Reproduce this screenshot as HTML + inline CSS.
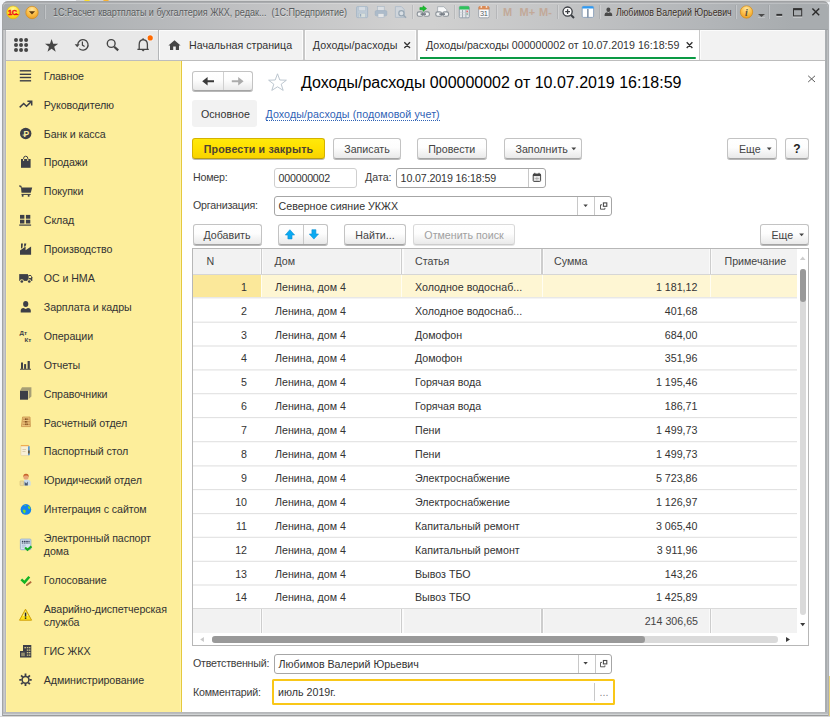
<!DOCTYPE html>
<html lang="ru">
<head>
<meta charset="utf-8">
<title>1С:Расчет квартплаты и бухгалтерия ЖКХ</title>
<style>
*{box-sizing:border-box;margin:0;padding:0}
html,body{width:830px;height:717px;overflow:hidden;background:#f3f6fa}
body{position:relative;font-family:"Liberation Sans",Arial,sans-serif;font-size:10.67px;color:#3c3c3c;line-height:13px}
.abs{position:absolute}
.t{position:absolute;white-space:nowrap;line-height:13px}
/* window frame */
#frame{left:1.6px;top:1.4px;width:827.5px;height:714.7px;border-radius:6px 6px 0 0;box-shadow:inset 0 1.4px 0 #a0a2a4;background:linear-gradient(to right,#a2a4a6 0,#a2a4a6 1.2px,#c9cacb 1.6px,#c9cacb 2.8px,#b5b7bb 3.2px,#b5b7bb 823px,#a8acaf 823.6px,#a8acaf 824.6px,#bcbec0 825.2px,#bcbec0 826.4px,#808488 826.8px)}
#tbar{left:2.8px;top:2.8px;width:825.6px;height:27px;border-radius:5px 5px 0 0;background:linear-gradient(to right,#a6aaad 0,#a8acaf 30px,#bfc0c2 234px,#d0d0d0 400px,#d0d0d0 430px,#c4c5c6 548px,#b2b5b8 708px,#a8acaf 790px,#a8acaf 100%)}
#tbar:before{content:"";position:absolute;left:0;top:0;right:0;height:1.3px;background:rgba(255,255,255,.22);border-radius:5px 5px 0 0}
#tbar:after{content:"";position:absolute;left:0;bottom:0;right:0;height:1.2px;background:rgba(0,0,0,.055)}
#bbar{left:2.8px;top:711.8px;width:825.4px;height:4.3px;background:linear-gradient(#b6b8ba 0,#b6b8ba 1.4px,#d0d3d4 1.9px,#d0d3d4 3px,#9a9b9c 3.4px)}
#client{left:5.9px;top:30.3px;width:819.2px;height:681.5px;background:#fff}
#tabsbar{left:5.9px;top:30.3px;width:819.2px;height:30.6px;background:#f2f2f2;border-bottom:1.1px solid #bdbdbd;border-top:1px solid #fbfbfb}
#sidebar{left:5.9px;top:60.8px;width:176.5px;height:651px;background:#fdee9b;border-right:1.4px solid #e5c93e;border-left:1px solid #fff3a6;box-shadow:inset -1.1px 0 0 #fff4aa}
.si{position:absolute;left:43.8px;white-space:nowrap;color:#333;line-height:13.3px;letter-spacing:-.08px}
.btn{position:absolute;height:20.8px;border:1px solid #c3c3c3;border-bottom-color:#a4a4a4;border-radius:3px;background:linear-gradient(#fff 0,#fdfdfd 45%,#e9e9e9 100%);box-shadow:0 1px .6px rgba(0,0,0,.28);text-align:center;line-height:20.4px;color:#444;white-space:nowrap}
.inp{position:absolute;height:20px;border:1px solid #a6a6a6;border-radius:3px;background:#fff;line-height:18.6px;padding-left:3.6px;color:#333;white-space:nowrap}
.row{position:absolute;left:193px;width:604px;height:23.85px}
.row span{position:absolute;top:6px;line-height:13px;white-space:nowrap;color:#333}
.c1{left:0;width:54px;text-align:right}
.c2{left:82px}
.c3{left:222px}
.c4{left:350px;width:154.4px;text-align:right}
.vl{position:absolute;width:1px;background:#e0e0e0}
</style>
</head>
<body>
<div class="abs" style="left:76px;top:0;width:754px;height:1.5px;background:#d3d4d5"></div>
<div class="abs" style="left:84px;top:-4.5px;width:6px;height:6px;border-radius:3px;background:#ffe02a"></div>
<div class="abs" style="left:103px;top:-4.5px;width:6px;height:6px;border-radius:3px;background:#f9b233"></div>
<div class="abs" style="left:0;top:716px;width:830px;height:1px;background:#d6d6d6"></div>
<div class="abs" style="left:829px;top:676px;width:1px;height:40px;background:#e9d37a"></div>
<div class="abs" id="frame"></div>
<div class="abs" id="tbar"></div>
<div class="abs" id="bbar"></div>
<div class="abs" id="client"></div>

<!-- title bar -->
<div class="t" style="left:53px;top:6px;font-size:10.67px;color:#5a5d60;text-shadow:0 1px 0 rgba(255,255,255,.45);transform:scaleX(.846);transform-origin:0 0">1С:Расчет квартплаты и бухгалтерия ЖКХ, редак...&nbsp; (1С:Предприятие)</div>
<div class="t" style="left:615.5px;top:6px;font-size:10.67px;color:#3d3128;text-shadow:0 1px 0 rgba(255,255,255,.35);transform:scaleX(.825);transform-origin:0 0">Любимов Валерий Юрьевич</div>
<div class="t" style="left:503px;top:6px;font-size:11px;font-weight:bold;color:#c2a999">M</div>
<div class="t" style="left:519.5px;top:6px;font-size:11px;font-weight:bold;color:#c2a999">M+</div>
<div class="t" style="left:539px;top:6px;font-size:11px;font-weight:bold;color:#c2a999">M-</div>

<!-- tabs bar -->
<div class="abs" id="tabsbar"></div>
<div class="abs" style="left:5.9px;top:31.3px;width:152px;height:28.4px;background:#e8e8e8"></div>
<div class="abs" style="left:157.9px;top:30.3px;width:1.3px;height:29.6px;background:#b4b6b8"></div>
<div class="abs" style="left:159.2px;top:31px;width:1px;height:28.3px;background:#fcfcfc"></div>
<div class="abs" style="left:302.3px;top:31px;width:3.4px;height:28.3px;background:#fcfcfc"></div>
<div class="abs" style="left:303.2px;top:30.3px;width:1.5px;height:29.6px;background:#c9c9c9"></div>
<div class="abs" style="left:415.4px;top:31px;width:1px;height:28.3px;background:#fcfcfc"></div>
<div class="abs" style="left:416.3px;top:30.3px;width:1.5px;height:29.6px;background:#c9c9c9"></div>
<div class="abs" style="left:417.8px;top:30.6px;width:281px;height:29.2px;background:#fff"></div>
<div class="abs" style="left:698.6px;top:30.3px;width:1.5px;height:29.6px;background:#c9c9c9"></div>
<div class="abs" style="left:700.1px;top:31px;width:1px;height:28.3px;background:#fcfcfc"></div>
<div class="abs" style="left:419.6px;top:57px;width:276.6px;height:2px;background:#0a9a44;border-radius:0 1px 1px 0"></div>
<div class="t" style="left:189px;top:39px;color:#333">Начальная страница</div>
<div class="t" style="left:312.8px;top:39px;color:#333;letter-spacing:.13px">Доходы/расходы</div>
<div class="t" style="left:426px;top:39px;color:#333">Доходы/расходы 000000002 от 10.07.2019 16:18:59</div>

<!-- sidebar -->
<div class="abs" id="sidebar"></div>
<div class="si" style="top:70px">Главное</div>
<div class="si" style="top:99px">Руководителю</div>
<div class="si" style="top:128px">Банк и касса</div>
<div class="si" style="top:156px">Продажи</div>
<div class="si" style="top:185px">Покупки</div>
<div class="si" style="top:214px">Склад</div>
<div class="si" style="top:243px">Производство</div>
<div class="si" style="top:272px">ОС и НМА</div>
<div class="si" style="top:301px">Зарплата и кадры</div>
<div class="si" style="top:330px">Операции</div>
<div class="si" style="top:359px">Отчеты</div>
<div class="si" style="top:388px">Справочники</div>
<div class="si" style="top:417px">Расчетный отдел</div>
<div class="si" style="top:445px">Паспортный стол</div>
<div class="si" style="top:474px">Юридический отдел</div>
<div class="si" style="top:503px">Интеграция с сайтом</div>
<div class="si" style="top:532px">Электронный паспорт<br>дома</div>
<div class="si" style="top:574px">Голосование</div>
<div class="si" style="top:603px">Аварийно-диспетчерская<br>служба</div>
<div class="si" style="top:645px">ГИС ЖКХ</div>
<div class="si" style="top:674px">Администрирование</div>

<svg class="abs" style="left:0;top:0;pointer-events:none" width="830" height="717" viewBox="0 0 830 717">
<g id="sideicons" fill="#3d3f47" stroke="none">
<!-- Главное -->
<rect x="19.8" y="70.1" width="11.3" height="1.4"/><rect x="19.8" y="73.6" width="11.3" height="1.4"/><rect x="19.8" y="76.8" width="11.3" height="1.4"/><rect x="19.8" y="80.1" width="11.3" height="1.4"/>
<!-- Руководителю -->
<path d="M19.7 107.4 L23.7 103.5 L26.5 106.3 L31 101.9" fill="none" stroke="#3d3f47" stroke-width="1.5"/>
<path d="M27.4 101.2 L31.7 101.2 L31.7 105.5" fill="none" stroke="#3d3f47" stroke-width="1.5"/>
<!-- Банк и касса -->
<circle cx="25.7" cy="133.5" r="5.7"/>
<text x="23.4" y="136.6" font-family="Liberation Sans, sans-serif" font-weight="bold" font-size="8.5" fill="#fdee9d">Р</text>
<rect x="22.6" y="134.6" width="4" height="0.9" fill="#fdee9d"/>
<!-- Продажи -->
<rect x="21" y="159" width="9.6" height="8.8"/>
<path d="M23.6 159.3 V158.3 a2.1 2.1 0 0 1 4.2 0 V159.3" fill="none" stroke="#3d3f47" stroke-width="1"/>
<path d="M23.6 159 V161 M27.8 159 V161" fill="none" stroke="#fdee9d" stroke-width="1"/>
<!-- Покупки -->
<path d="M19.2 185.9 L20.8 186.3 L21.4 187.8" fill="none" stroke="#3d3f47" stroke-width="1.2"/>
<path d="M21 187.5 H32.2 L30.8 192.8 H21.5 Z"/>
<rect x="21.5" y="193.9" width="9.2" height="1"/>
<rect x="21.8" y="194.6" width="1.7" height="2.1"/><rect x="27.8" y="194.6" width="1.7" height="2.1"/>
<!-- Склад -->
<rect x="20" y="214.9" width="4.4" height="3.8"/><rect x="25.9" y="214.9" width="4.4" height="3.8"/>
<rect x="20" y="219.7" width="4.4" height="3.8"/><rect x="25.9" y="219.7" width="4.4" height="3.8"/>
<rect x="19.2" y="224.5" width="11.9" height="1.2"/>
<!-- Производство -->
<path d="M20 254.8 V250.6 L25.6 246.4 V250.2 L31.1 246.6 V254.8 Z"/>
<path d="M21 243.4 H22.9 L22.5 247.6 L21 248.8 Z"/>
<path d="M24.1 243.4 H26.3 L25.9 245.6 L24.1 247 Z"/>
<!-- ОС и НМА -->
<path d="M19.2 274.1 H28 V280.9 H19.2 Z"/>
<path d="M28.4 275 H30.8 L32.3 277.3 V280.9 H28.4 Z"/>
<rect x="29" y="276" width="2.1" height="2" fill="#fdee9d"/>
<circle cx="21.8" cy="281.3" r="2.1" fill="#fdee9d"/><circle cx="29.3" cy="281.3" r="2.1" fill="#fdee9d"/>
<circle cx="21.8" cy="281.5" r="1.35"/><circle cx="29.3" cy="281.5" r="1.35"/>
<!-- Зарплата и кадры -->
<ellipse cx="25.7" cy="304" rx="2.6" ry="3"/>
<path d="M20.7 312.6 V310.6 Q20.7 308.3 23.5 307.9 L25.7 308.9 L27.9 307.9 Q30.8 308.3 30.8 310.6 V312.6 Z"/>
<!-- Операции -->
<text x="19.6" y="335" font-family="Liberation Sans, sans-serif" font-weight="bold" font-size="6.2">Дт</text>
<text x="24.4" y="341.8" font-family="Liberation Sans, sans-serif" font-weight="bold" font-size="6.2">Кт</text>
<!-- Отчеты -->
<rect x="21" y="362.5" width="2" height="6.4"/><rect x="24.1" y="364.1" width="2" height="4.8"/><rect x="27.6" y="361" width="2.2" height="7.9"/>
<rect x="20" y="368.8" width="11" height="0.9"/>
<!-- Справочники -->
<path d="M22 387.3 H31.4 V396.6 L28.6 399 V390.5 H20.2 Z" opacity=".45"/>
<rect x="20" y="390.7" width="8" height="9"/>
<!-- ГИС ЖКХ -->
<path d="M23 645 H31.3 V657.6 H20 V651 H23 Z"/>
<g fill="#fdee9d" opacity=".75"><rect x="24.4" y="647" width="1.6" height="1.3"/><rect x="26.8" y="647" width="1.6" height="1.3"/><rect x="29" y="647" width="1.4" height="1.3"/><rect x="26.8" y="649.5" width="1.6" height="1.3"/><rect x="29" y="649.5" width="1.4" height="1.3"/><rect x="26.8" y="652" width="1.6" height="1.3"/><rect x="29" y="652" width="1.4" height="1.3"/><rect x="26.8" y="654.5" width="1.6" height="1.3"/><rect x="29" y="654.5" width="1.4" height="1.3"/><rect x="21.2" y="652.6" width="3.6" height="3.6" opacity=".6"/></g>
<!-- Администрирование -->
<g transform="translate(25.5 679.8)" fill="none" stroke="#3d3f47">
<circle r="3.4" stroke-width="1.5"/>
<g stroke-width="1.8"><path d="M0 -3.9V-6.2M0 3.9V6.2M-3.9 0H-6.2M3.9 0H6.2M2.76 -2.76L4.4 -4.4M-2.76 -2.76L-4.4 -4.4M2.76 2.76L4.4 4.4M-2.76 2.76L-4.4 4.4"/></g>
</g>
</g>
<!-- coloured sidebar icons -->
<g id="coloricons">
<!-- Расчетный отдел: abacus -->
<path d="M22.6 417 H30 L30.4 426.6 H21.4 Z" fill="#e9c27c" stroke="#c9924a" stroke-width=".8"/>
<path d="M23 419.2H29.6M22.8 421.8H29.8M22.6 424.3H30" stroke="#b77a36" stroke-width=".7"/>
<path d="M25.6 418.4v1.6M27 418.4v1.6M25.4 421v1.6M26.8 421v1.6M25.8 423.5v1.6M27.2 423.5v1.6" stroke="#7b4a1e" stroke-width="1"/>
<!-- Паспортный стол -->
<rect x="20.8" y="445.4" width="8.4" height="10.2" rx=".8" fill="#f8efd6" stroke="#e3cf9c" stroke-width=".6"/>
<rect x="28" y="446.2" width="1.7" height="9" fill="#5a9bd3"/>
<rect x="20.8" y="445.2" width="8" height="1" fill="#f0a13a"/>
<rect x="28" y="450.5" width="1.7" height="3" fill="#6b5a3a"/>
<path d="M22.5 449.5h3.5M22.5 451.5h3" stroke="#cdbb97" stroke-width=".7"/>
<!-- Юридический отдел -->
<path d="M23.4 485.4 V482.4 Q23.4 479.8 26 479.6 Q30.6 479.8 30.6 482.6 V485.4 Z" fill="#c9dcec"/>
<path d="M24.6 485.4 V481.4 L26.2 483.6 L27.8 481.4 V485.4 Z" fill="#4a5a72"/>
<circle cx="26" cy="477" r="2.6" fill="#e7a679"/>
<path d="M23.3 477 Q23.2 473.6 26.2 473.8 Q28.9 473.8 28.7 477 Q27.6 475.4 26 475.6 Q24.2 475.6 23.3 477Z" fill="#c9652c"/>
<rect x="20" y="480.9" width="3.7" height="4.7" rx=".5" fill="#ead9a0" stroke="#cdb673" stroke-width=".5"/>
<!-- Интеграция с сайтом -->
<circle cx="25.9" cy="509.4" r="5.3" fill="#1283ef"/>
<path d="M22.6 510.2 q1.2-1.4 2.4-.4 q1.4 1.4.3 2.8 q-.8 1.2-1.6.4 q-.3-1.4-1.1-2.8z M28 506.6 q1.6-.8 2.4.8 q.1 1.4-1.1 1.8 q-1.5-.6-1.3-2.6z M24.4 505.3 q.9-.8 1.7-.2 q-.3.9-1.3 1z" fill="#7fdc22"/>
<!-- Электронный паспорт дома -->
<rect x="20.4" y="539.1" width="10.5" height="10.6" rx=".8" fill="#d5e2f0" stroke="#8caace" stroke-width=".8"/>
<path d="M21.8 541.4h7.8M21.8 543h7.8" stroke="#34415c" stroke-width="1.1" stroke-dasharray="1.6 .6"/>
<path d="M21.8 545.2h4M21.8 547h3" stroke="#9db4d2" stroke-width=".8"/>
<path d="M25.1 547.6 L27.5 549.8 L31.5 546.4" fill="none" stroke="#12ad22" stroke-width="2.1"/>
<!-- Голосование -->
<path d="M21.3 579.4 L24.5 582.4 L29.3 576.8" fill="none" stroke="#12b424" stroke-width="2.5"/>
<path d="M26.6 585.2 L31.2 581.7" stroke="#b0653a" stroke-width="1.7"/>
<path d="M26 585.8 L27.2 585.6 L26.4 584.6 Z" fill="#5a3a22"/>
<!-- Аварийно-диспетчерская служба -->
<path d="M25.5 609.2 L31.6 620.2 H19.5 Z" fill="#ffe21a" stroke="#cf9f0a" stroke-width="1" stroke-linejoin="round"/>
<path d="M25.5 611 L28.3 616 H22.7 Z" fill="#fff6a8" opacity=".8"/>
<rect x="24.8" y="612.6" width="1.5" height="4" fill="#222"/><rect x="24.8" y="617.4" width="1.5" height="1.5" fill="#222"/>
</g>
</svg>

<!-- content header -->
<div class="btn" style="left:192.3px;top:71.2px;width:60.8px;height:19.6px"></div>
<div class="abs" style="left:223px;top:72px;width:1px;height:18px;background:#d0d0d0"></div>
<div class="t" style="left:301px;top:73px;font-size:16px;line-height:19px;color:#000">Доходы/расходы 000000002 от 10.07.2019 16:18:59</div>
<div class="abs" style="left:192px;top:100px;width:64.5px;height:27px;background:#f2f2f2;border-radius:3px"></div>
<div class="t" style="left:201px;top:108px;color:#333">Основное</div>
<div class="t" style="left:265.5px;top:108.6px;color:#2f62b5;border-bottom:1px dotted #2f62b5;line-height:11.7px;letter-spacing:.09px">Доходы/расходы (подомовой учет)</div>

<div class="btn" style="left:192px;top:138px;width:133px;background:linear-gradient(#ffe90a,#ffe000 50%,#f8d300);border-color:#d4b200;border-bottom-color:#b89c10;font-weight:bold;color:#4d4432;letter-spacing:.15px">Провести и закрыть</div>
<div class="btn" style="left:333px;top:138px;width:68px">Записать</div>
<div class="btn" style="left:417px;top:138px;width:69.5px">Провести</div>
<div class="btn" style="left:503.5px;top:138px;width:78px;text-align:left;padding-left:11px">Заполнить</div>
<div class="btn" style="left:727px;top:138px;width:50px;text-align:left;padding-left:11px">Еще</div>
<div class="btn" style="left:785px;top:138px;width:24px;font-weight:bold;font-size:12px;color:#222">?</div>

<div class="t" style="left:193px;top:171px;letter-spacing:-.2px">Номер:</div>
<div class="inp" style="left:274px;top:168px;width:83px;border-color:#cfcfcf;letter-spacing:-.22px">000000002</div>
<div class="t" style="left:365px;top:171px">Дата:</div>
<div class="inp" style="left:396px;top:167.5px;width:149.6px;letter-spacing:-.12px">10.07.2019 16:18:59</div>
<div class="abs" style="left:528px;top:168.5px;width:1px;height:18px;background:#c8c8c8"></div>
<div class="t" style="left:193px;top:198.8px;letter-spacing:-.2px">Организация:</div>
<div class="inp" style="left:274px;top:195.7px;width:338.2px">Северное сияние УКЖХ</div>
<div class="abs" style="left:577.2px;top:196.7px;width:1px;height:18px;background:#c8c8c8"></div>
<div class="abs" style="left:594.2px;top:196.7px;width:1px;height:18px;background:#c8c8c8"></div>

<div class="btn" style="left:192.5px;top:224px;width:69px">Добавить</div>
<div class="btn" style="left:278px;top:224px;width:49.5px"></div>
<div class="abs" style="left:302.5px;top:225px;width:1px;height:19px;background:#c8c8c8"></div>
<div class="btn" style="left:344px;top:224px;width:62px">Найти...</div>
<div class="btn" style="left:413px;top:224px;width:102px;color:#a0a0a0;border-color:#dbdbdb #d8d8d8 #cdcdcd;box-shadow:0 1px .6px rgba(0,0,0,.1)">Отменить поиск</div>
<div class="btn" style="left:759.5px;top:224px;width:49.5px;text-align:left;padding-left:11px">Еще</div>

<!-- table -->
<div class="abs" style="left:192px;top:247.9px;width:617.3px;height:398px;border:1px solid #b7b7b7;background:#fff"></div>
<div class="abs" style="left:193px;top:248.9px;width:604px;height:25.7px;background:#f2f2f2;border-bottom:1px solid #d6d6d6"></div>
<div class="t" style="left:206.5px;top:255px;color:#444">N</div>
<div class="t" style="left:274.5px;top:255px;color:#444">Дом</div>
<div class="t" style="left:415px;top:255px;color:#444">Статья</div>
<div class="t" style="left:554px;top:255px;color:#444">Сумма</div>
<div class="t" style="left:724.5px;top:255px;color:#444">Примечание</div>
<div id="rows">
<div class="row" style="top:274.6px;height:22.8px;background:#fef6d3"><i style="position:absolute;left:0;top:0;width:68px;height:100%;background:#fbe89a"></i><span class="c1" style="top:6.4px">1</span><span class="c2" style="top:6.4px">Ленина, дом 4</span><span class="c3" style="top:6.4px">Холодное водоснаб...</span><span class="c4" style="top:6.4px">1 181,12</span></div>
<div class="row" style="top:299px"><span class="c1">2</span><span class="c2">Ленина, дом 4</span><span class="c3">Холодное водоснаб...</span><span class="c4">401,68</span></div>
<div class="row" style="top:323px"><span class="c1">3</span><span class="c2">Ленина, дом 4</span><span class="c3">Домофон</span><span class="c4">684,00</span></div>
<div class="row" style="top:346px"><span class="c1">4</span><span class="c2">Ленина, дом 4</span><span class="c3">Домофон</span><span class="c4">351,96</span></div>
<div class="row" style="top:370px"><span class="c1">5</span><span class="c2">Ленина, дом 4</span><span class="c3">Горячая вода</span><span class="c4">1 195,46</span></div>
<div class="row" style="top:394px"><span class="c1">6</span><span class="c2">Ленина, дом 4</span><span class="c3">Горячая вода</span><span class="c4">186,71</span></div>
<div class="row" style="top:418px"><span class="c1">7</span><span class="c2">Ленина, дом 4</span><span class="c3">Пени</span><span class="c4">1 499,73</span></div>
<div class="row" style="top:442px"><span class="c1">8</span><span class="c2">Ленина, дом 4</span><span class="c3">Пени</span><span class="c4">1 499,73</span></div>
<div class="row" style="top:466px"><span class="c1">9</span><span class="c2">Ленина, дом 4</span><span class="c3">Электроснабжение</span><span class="c4">5 723,86</span></div>
<div class="row" style="top:490px"><span class="c1">10</span><span class="c2">Ленина, дом 4</span><span class="c3">Электроснабжение</span><span class="c4">1 126,97</span></div>
<div class="row" style="top:514px"><span class="c1">11</span><span class="c2">Ленина, дом 4</span><span class="c3">Капитальный ремонт</span><span class="c4">3 065,40</span></div>
<div class="row" style="top:538px"><span class="c1">12</span><span class="c2">Ленина, дом 4</span><span class="c3">Капитальный ремонт</span><span class="c4">3 911,96</span></div>
<div class="row" style="top:562px"><span class="c1">13</span><span class="c2">Ленина, дом 4</span><span class="c3">Вывоз ТБО</span><span class="c4">143,26</span></div>
<div class="row" style="top:585px"><span class="c1">14</span><span class="c2">Ленина, дом 4</span><span class="c3">Вывоз ТБО</span><span class="c4">1 425,89</span></div>
</div>
<div class="abs" style="left:193px;top:608.4px;width:604px;height:24.7px;background:#f2f2f2;border-top:1px solid #dadada"></div>
<div class="t" style="left:543px;top:614.5px;width:155px;text-align:right;color:#444">214 306,65</div>
<div class="abs" style="left:259.8px;top:248.9px;width:3.4px;height:24.8px;background:#fafafa"></div><div class="abs" style="left:260.9px;top:248.9px;width:1.2px;height:24.8px;background:#cdcdcd"></div><div class="abs" style="left:261px;top:274.6px;width:1px;height:22.8px;background:#fffdf2"></div><div class="abs" style="left:259.8px;top:609.4px;width:3.4px;height:23.7px;background:#fafafa"></div><div class="abs" style="left:260.9px;top:609.4px;width:1.2px;height:23.7px;background:#cdcdcd"></div>
<div class="abs" style="left:400.2px;top:248.9px;width:3.4px;height:24.8px;background:#fafafa"></div><div class="abs" style="left:401.29999999999995px;top:248.9px;width:1.2px;height:24.8px;background:#cdcdcd"></div><div class="abs" style="left:401.4px;top:274.6px;width:1px;height:22.8px;background:#fffdf2"></div><div class="abs" style="left:400.2px;top:609.4px;width:3.4px;height:23.7px;background:#fafafa"></div><div class="abs" style="left:401.3px;top:609.4px;width:1.2px;height:23.7px;background:#cdcdcd"></div>
<div class="abs" style="left:540.3px;top:248.9px;width:3.4px;height:24.8px;background:#fafafa"></div><div class="abs" style="left:541.4px;top:248.9px;width:1.2px;height:24.8px;background:#cdcdcd"></div><div class="abs" style="left:541.5px;top:274.6px;width:1px;height:22.8px;background:#fffdf2"></div><div class="abs" style="left:540.3px;top:609.4px;width:3.4px;height:23.7px;background:#fafafa"></div><div class="abs" style="left:541.4px;top:609.4px;width:1.2px;height:23.7px;background:#cdcdcd"></div>
<div class="abs" style="left:709.0999999999999px;top:248.9px;width:3.4px;height:24.8px;background:#fafafa"></div><div class="abs" style="left:710.1999999999999px;top:248.9px;width:1.2px;height:24.8px;background:#cdcdcd"></div><div class="abs" style="left:710.3px;top:274.6px;width:1px;height:22.8px;background:#fffdf2"></div><div class="abs" style="left:709.1px;top:609.4px;width:3.4px;height:23.7px;background:#fafafa"></div><div class="abs" style="left:710.2px;top:609.4px;width:1.2px;height:23.7px;background:#cdcdcd"></div>
<svg class="abs" style="left:0;top:0;pointer-events:none" width="830" height="717" viewBox="0 0 830 717"><g fill="#e1e1e1"><rect x="193" y="297.25" width="604" height="1.1"/><rect x="193" y="321.65" width="604" height="1.1"/><rect x="193" y="345.45" width="604" height="1.1"/><rect x="193" y="369.35" width="604" height="1.1"/><rect x="193" y="393.15" width="604" height="1.1"/><rect x="193" y="417.05" width="604" height="1.1"/><rect x="193" y="441.15" width="604" height="1.1"/><rect x="193" y="465.35" width="604" height="1.1"/><rect x="193" y="489.05" width="604" height="1.1"/><rect x="193" y="513.05" width="604" height="1.1"/><rect x="193" y="536.75" width="604" height="1.1"/><rect x="193" y="560.75" width="604" height="1.1"/><rect x="193" y="584.45" width="604" height="1.1"/></g></svg>
<!-- scrollbars -->
<div class="abs" style="left:800px;top:268.5px;width:5.6px;height:346px;background:#dadada;border-radius:3px"></div>
<div class="abs" style="left:800px;top:268.5px;width:5.6px;height:33.5px;background:#999;border-radius:3px"></div>
<div class="abs" style="left:212px;top:636.4px;width:566px;height:6.3px;background:#dadada;border-radius:3.2px"></div>
<div class="abs" style="left:212px;top:636.4px;width:433.3px;height:6.3px;background:#999;border-radius:3.2px"></div>

<!-- bottom fields -->
<div class="t" style="left:193px;top:657px;letter-spacing:-.2px">Ответственный:</div>
<div class="inp" style="left:274px;top:653.5px;width:338px">Любимов Валерий Юрьевич</div>
<div class="abs" style="left:577.5px;top:654.5px;width:1px;height:18px;background:#c8c8c8"></div>
<div class="abs" style="left:595px;top:654.5px;width:1px;height:18px;background:#c8c8c8"></div>
<div class="t" style="left:193px;top:685.5px;letter-spacing:-.2px">Комментарий:</div>
<div class="inp" style="left:271.5px;top:679px;width:343px;height:26px;border:2px solid #f9c718;border-radius:1.5px;line-height:22.4px;padding-left:4.6px">июль 2019г.</div>
<div class="abs" style="left:594px;top:683px;width:1px;height:18px;background:#c8c8c8"></div>
<div class="t" style="left:599.5px;top:686px;color:#888">...</div>
<svg class="abs" style="left:0;top:0;pointer-events:none" width="830" height="717" viewBox="0 0 830 717">
<defs>
<radialGradient id="g1c" cx=".5" cy=".25" r=".8"><stop offset="0" stop-color="#fff7a0"/><stop offset=".5" stop-color="#ffe42a"/><stop offset="1" stop-color="#f5c400"/></radialGradient>
<radialGradient id="gor" cx=".5" cy=".25" r=".8"><stop offset="0" stop-color="#ffe7a0"/><stop offset=".55" stop-color="#fbbd45"/><stop offset="1" stop-color="#e99a1c"/></radialGradient>
</defs>
<!-- title bar icons -->
<circle cx="13.1" cy="12.4" r="6.4" fill="url(#g1c)" stroke="#e0b000" stroke-width=".5"/>
<text x="7.9" y="14.9" font-family="Liberation Sans, sans-serif" font-weight="bold" font-size="7.4" fill="#ee1018" stroke="#ee1018" stroke-width=".35" letter-spacing="-.3">1С</text>
<rect x="14.2" y="14" width="4.2" height="1.1" fill="#ee1018"/>
<circle cx="32" cy="12.5" r="6.2" fill="url(#gor)" stroke="#d08a1c" stroke-width=".7"/>
<path d="M28.9 11.3 H35.1 L32 14.6 Z" fill="#5b3a10"/>
<g stroke-width="1">
<path d="M44.5 5V19M412.5 5V19M454.5 5V19M496.5 5V19M557.5 5V19M599.5 5V19M735.5 5V19M768.5 5V19" stroke="#8f9296" opacity=".32"/>
<path d="M45.5 5V19M413.5 5V19M455.5 5V19M497.5 5V19M558.5 5V19M600.5 5V19M736.5 5V19M769.5 5V19" stroke="#e4e5e7" opacity=".4"/>
</g>
<!-- save -->
<g opacity=".68">
<rect x="356.6" y="6.6" width="11" height="11" rx="1" fill="#b9cbdc" stroke="#8ea8c2" stroke-width=".8"/>
<rect x="358.8" y="6.8" width="6.6" height="4" fill="#dbe5ee" stroke="#9fb4c8" stroke-width=".5"/>
<rect x="358.8" y="13.2" width="6.6" height="4.2" fill="#dfe9e4" stroke="#9fb4c8" stroke-width=".5"/>
<rect x="359.8" y="14" width="1.4" height="2.6" fill="#7f9bb8"/>
<!-- printer -->
<rect x="377.6" y="6.6" width="6.6" height="4.4" fill="#e2e8ee" stroke="#98adc2" stroke-width=".6"/>
<rect x="375.2" y="10.6" width="11.6" height="5.2" rx="1.2" fill="#9db3c9" stroke="#8aa2ba" stroke-width=".6"/>
<rect x="378" y="13.6" width="6" height="4" fill="#f0f2f4" stroke="#98adc2" stroke-width=".6"/>
<!-- preview -->
<path d="M395.4 6.6 H401.4 L404.2 9.4 V17.4 H395.4 Z" fill="#cfd8e1" stroke="#95abc2" stroke-width=".7"/>
<circle cx="401.4" cy="13.2" r="2.6" fill="#dfe7ee" stroke="#7f95a8" stroke-width="1.2"/>
<path d="M403.4 15.2 L406 17.8" stroke="#7f95a8" stroke-width="1.6"/>
</g>
<!-- link+arrow -->
<g>
<rect x="417.2" y="11.9" width="5.6" height="4.4" rx="1.8" fill="#f0f2f3" stroke="#8a9198" stroke-width="1.1"/>
<rect x="423.8" y="11.9" width="5.6" height="4.4" rx="1.8" fill="#f0f2f3" stroke="#8a9198" stroke-width="1.1"/>
<rect x="420.6" y="13.3" width="5.4" height="1.6" fill="#747b83"/>
<path d="M419.9 7.6 H423 V5.8 L426.6 8.6 L423 11.4 V9.7 H419.9 Z" fill="#1cc030" stroke="#0f9a20" stroke-width=".5"/>
<!-- link+doc -->
<path d="M437.6 12.2 V6.7 H443.8 L446.8 9.7 V12.2" fill="#f7f8f9" stroke="#9aa1a8" stroke-width=".7"/>
<rect x="435.8" y="11.9" width="5.8" height="4.4" rx="1.8" fill="#f0f2f3" stroke="#8a9198" stroke-width="1.1"/>
<rect x="442.8" y="11.9" width="5.8" height="4.4" rx="1.8" fill="#f0f2f3" stroke="#8a9198" stroke-width="1.1"/>
<rect x="439.4" y="13.3" width="5.6" height="1.6" fill="#747b83"/>
</g>
<!-- calculator -->
<rect x="459.3" y="6.3" width="10" height="11.5" rx="1.2" fill="#e6e9ec" stroke="#8593a2" stroke-width=".8"/>
<path d="M459.3 9.6 V7.5 Q459.3 6.3 460.5 6.3 H468.1 Q469.3 6.3 469.3 7.5 V9.6 Z" fill="#2fc25c"/>
<path d="M462.5 10v7.6M465.9 10v7.6" stroke="#8e99a6" stroke-width=".8"/>
<path d="M460 12.4h8.8M460 14.9h8.8" stroke="#c2c8ce" stroke-width=".5"/>
<rect x="466.6" y="10.6" width="1.2" height="1.6" fill="#e84848"/><rect x="466.6" y="13.4" width="1.2" height="1.2" fill="#5a9a6a"/>
<!-- calendar -->
<rect x="478.7" y="6.6" width="10.4" height="11.2" rx="1.4" fill="#fbfbfc" stroke="#8f979f" stroke-width=".8"/>
<path d="M478.5 9.6 V7.6 Q478.5 6 480.1 6 H487.7 Q489.3 6 489.3 7.6 V9.6 Z" fill="#d98a55"/>
<circle cx="481.3" cy="6.9" r=".9" fill="#fbe9dc"/><circle cx="486.5" cy="6.9" r=".9" fill="#fbe9dc"/>
<text x="479.9" y="16.4" font-family="Liberation Sans, sans-serif" font-size="7.4" fill="#555c64" letter-spacing="-.2">31</text>
<!-- zoom -->
<circle cx="567.6" cy="11.6" r="4.6" fill="#fafafa" stroke="#3c3f44" stroke-width="1.3"/>
<path d="M565.2 11.6H570M567.6 9.2V14" stroke="#3c3f44" stroke-width="1.3"/>
<path d="M571 15 L574 18" stroke="#3c3f44" stroke-width="2"/>
<!-- panels -->
<rect x="582.2" y="6.4" width="11.4" height="11" rx="1.2" fill="#fff" stroke="#7c96b4" stroke-width=".8"/>
<path d="M582.2 8.4 V7.6 Q582.2 6.2 583.6 6.2 H592.2 Q593.6 6.2 593.6 7.6 V8.4 Z" fill="#2f9af2"/>
<path d="M587.9 9V17.2" stroke="#4c6482" stroke-width="1.1"/>
<!-- user -->
<ellipse cx="608.4" cy="9.7" rx="2" ry="2.3" fill="#4a4a4a"/>
<path d="M604.6 16 V14.4 Q604.6 12.6 607 12.3 L608.4 13 L609.8 12.3 Q612.2 12.6 612.2 14.4 V16 Z" fill="#4a4a4a"/>
<!-- info -->
<circle cx="746.5" cy="12" r="6.2" fill="url(#gor)" stroke="#d08a1c" stroke-width=".7"/>
<text x="744.9" y="15.6" font-family="Liberation Serif, serif" font-weight="bold" font-style="italic" font-size="10" fill="#5a5040">i</text>
<path d="M758 13.9 H765 L761.5 17 Z" fill="#4a4a4a"/>
<rect x="758" y="17.2" width="7" height=".8" fill="#e0e0e0" opacity=".5"/>
<!-- window buttons -->
<rect x="776.4" y="13.9" width="5.8" height="1.9" fill="#333"/>
<rect x="776.4" y="16" width="5.8" height=".8" fill="#e6e6e6" opacity=".7"/>
<rect x="793.5" y="8.7" width="8.2" height="7.2" fill="none" stroke="#333" stroke-width="1"/>
<rect x="793.5" y="8.4" width="8.2" height="1.8" fill="#333"/>
<rect x="793" y="16.8" width="9.2" height=".8" fill="#e6e6e6" opacity=".7"/>
<path d="M812.4 8.6 L819.2 15.3 M819.2 8.6 L812.4 15.3" stroke="#2c2c2c" stroke-width="1.45"/>

<!-- tabs bar icons -->
<g fill="#454545">
<circle cx="16" cy="40" r="2"/><circle cx="21.05" cy="40" r="2"/><circle cx="26.1" cy="40" r="2"/>
<circle cx="16" cy="44.95" r="2"/><circle cx="21.05" cy="44.95" r="2"/><circle cx="26.1" cy="44.95" r="2"/>
<circle cx="16" cy="49.9" r="2"/><circle cx="21.05" cy="49.9" r="2"/><circle cx="26.1" cy="49.9" r="2"/>
<path d="M51.6 39 L53.2 43.8 L58.2 43.8 L54.2 46.8 L55.7 51.7 L51.6 48.7 L47.5 51.7 L49 46.8 L45 43.8 L50 43.8 Z"/>
<!-- home -->
<path d="M174.5 40.3 L180.6 45.6 H179 V50 H175.8 V46.6 H173.2 V50 H170 V45.6 H168.4 Z"/>
</g>
<!-- history -->
<g fill="none" stroke="#454545" stroke-width="1.3">
<path d="M77.7 44.6 A5.2 5.2 0 1 1 79.2 48.6"/>
<path d="M82.4 41.6 V45.1 L84.6 46.6" stroke-width="1.2"/>
</g>
<path d="M74.7 44.2 H79.7 L77.2 47.3 Z" fill="#454545"/>
<!-- search -->
<circle cx="111.2" cy="43.5" r="3.9" fill="none" stroke="#454545" stroke-width="1.4"/>
<path d="M114.2 46.7 L118.2 50.4" stroke="#454545" stroke-width="2.2"/>
<!-- bell -->
<path d="M137.4 49.3 H148.8 M139.2 49 V44.4 Q139.2 40.2 143.1 39.7 Q147.4 40.2 147.4 44.4 V49" fill="none" stroke="#454545" stroke-width="1.3"/>
<path d="M143.1 38.2V39.8" stroke="#454545" stroke-width="1.3"/>
<path d="M141.6 50 H144.6 L143.1 51.6 Z" fill="#454545"/>
<circle cx="150.2" cy="37.9" r="3.3" fill="#f4f4f4"/>
<circle cx="150.2" cy="37.9" r="2.6" fill="#ff6a00"/>

<!-- tab close -->
<path d="M404.3 42.2 L410 47.9 M410 42.2 L404.3 47.9 M686.7 42.2 L692.4 47.9 M692.4 42.2 L686.7 47.9" stroke="#333" stroke-width="1.35" fill="none"/>
<!-- nav arrows -->
<path d="M202.2 81.2 L207.6 77 V80.2 H214 V82.3 H207.6 V85.5 Z" fill="#3a3a3a"/>
<path d="M243.6 81.2 L238.2 77 V80.2 H231.8 V82.3 H238.2 V85.5 Z" fill="#ababab"/>
<!-- star outline -->
<path d="M277.5 73.8 L279.8 80 L286.4 80.2 L281.2 84.2 L283.2 90.4 L277.5 86.8 L271.8 90.4 L273.8 84.2 L268.6 80.2 L275.2 80 Z" fill="#fff" stroke="#b4c0ca" stroke-width=".9" stroke-linejoin="miter"/>
<!-- content close -->
<path d="M808.2 75.8 L815 82 M815 75.8 L808.2 82" stroke="#5a5a5a" stroke-width="1"/>
<!-- dropdown triangles -->
<g fill="#444">
<path d="M571.4 147.6 H576.2 L573.8 150.2 Z"/>
<path d="M766.8 147.6 H771.6 L769.2 150.2 Z"/>
<path d="M799.2 233.6 H804 L801.6 236.2 Z"/>
<path d="M583.4 204.4 H587.8 L585.6 206.9 Z"/>
<path d="M583.4 662 H587.8 L585.6 664.5 Z"/>
</g>
<!-- open icons -->
<g fill="none" stroke="#4a4a4a">
<rect x="603.4" y="202.9" width="3.4" height="3.4" stroke-width="1.1"/>
<path d="M602 204.8 H600.5 V209.2 H604.9 V207.8" stroke-width=".9"/>
<rect x="603.4" y="660.5" width="3.4" height="3.4" stroke-width="1.1"/>
<path d="M602 662.4 H600.5 V666.8 H604.9 V665.4" stroke-width=".9"/>
</g>
<!-- small calendar -->
<rect x="533.2" y="174.2" width="7.4" height="7.2" rx=".8" fill="#e8e8e8" stroke="#444" stroke-width="1"/>
<rect x="533" y="173.8" width="7.8" height="2.2" fill="#444"/>
<path d="M534.8 172.8v1.6M539 172.8v1.6" stroke="#444" stroke-width="1"/>
<path d="M534.6 178.6h4.6M536.9 176.6v4" stroke="#999" stroke-width=".6"/>
<!-- blue arrows -->
<path d="M289.9 229.7 L294.6 235 H292 V238.9 H287.9 V235 H285.3 Z" fill="#0aaaf2" stroke="#0a8fd4" stroke-width=".6"/>
<path d="M313.9 239.1 L318.5 234 H315.9 V229.7 H311.9 V234 H309.3 Z" fill="#0aaaf2" stroke="#0a8fd4" stroke-width=".6"/>
<!-- scrollbar arrows -->
<path d="M799.9 260.1 L802.7 256.5 L805.5 260.1 Z" fill="#cdcdcd"/>
<path d="M800.2 623 H805.2 L802.7 626.3 Z" fill="#3a3a3a"/>
<path d="M203.9 637 V642 L200.2 639.5 Z" fill="#c8c8c8"/>
<path d="M786 637 V642 L790 639.5 Z" fill="#3a3a3a"/>
</svg>

</body>
</html>
